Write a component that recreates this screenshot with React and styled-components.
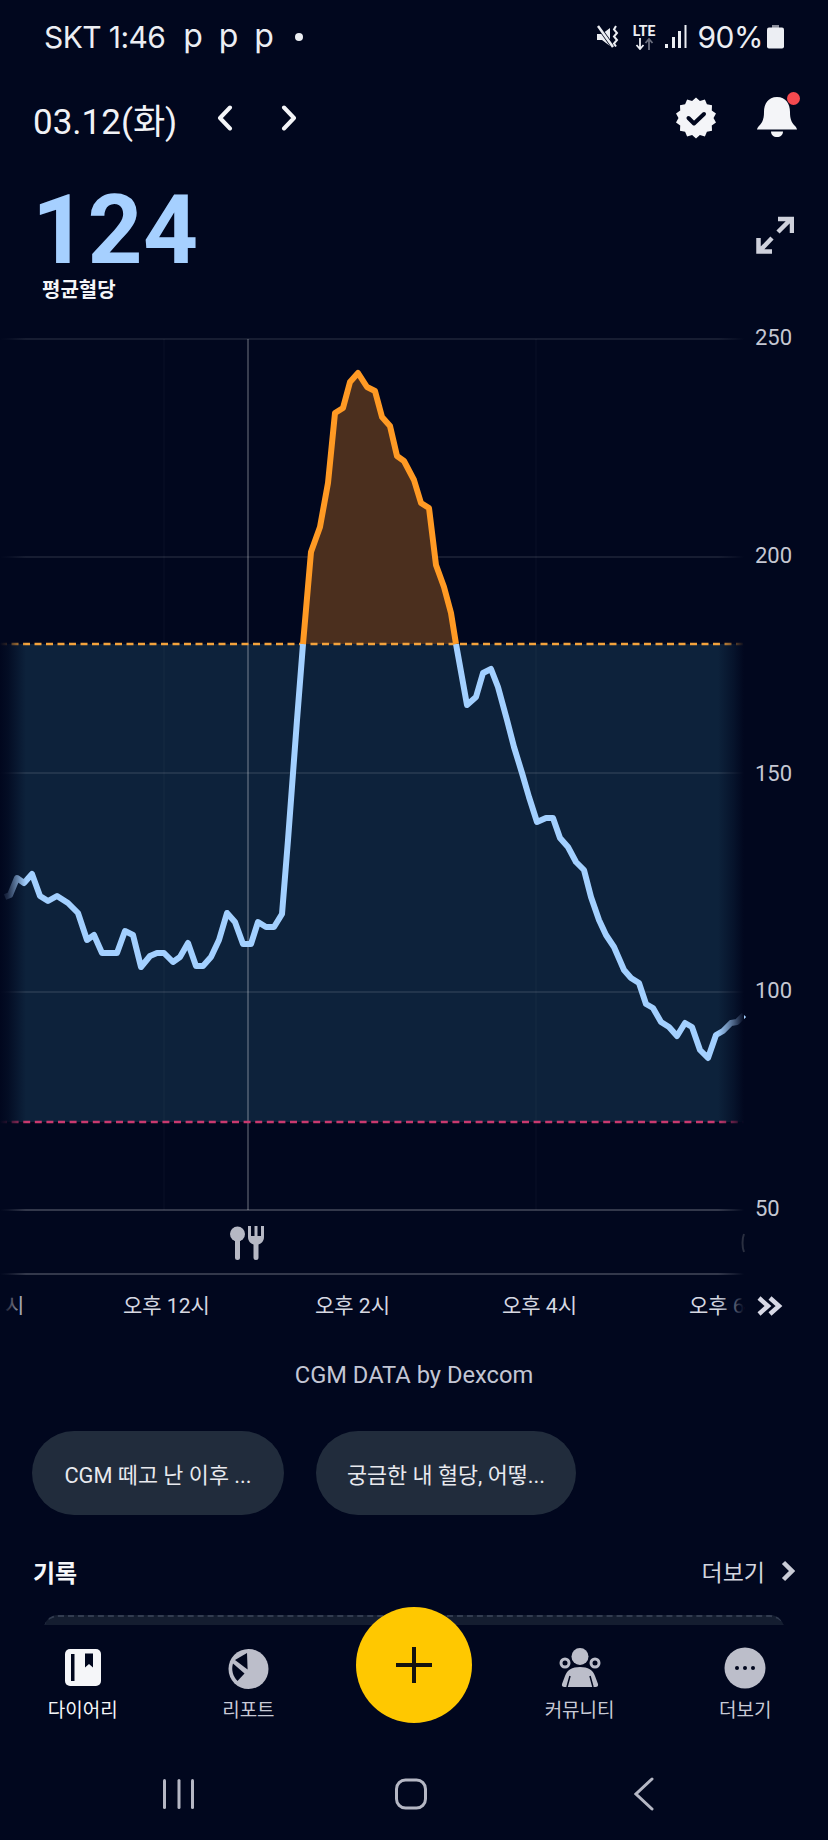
import React from "react";
import styled, { createGlobalStyle } from "styled-components";

const PAGE_BG = "#01071e";
const FONT = `Roboto, "Noto Sans CJK KR", sans-serif`;

const GlobalStyle = createGlobalStyle`
  html, body {
    margin: 0;
    padding: 0;
    background: ${PAGE_BG};
  }
`;

const Screen = styled.div`
  position: relative;
  width: 828px;
  height: 1840px;
  overflow: hidden;
  background: ${PAGE_BG};
  font-family: ${FONT};
  color: #fff;
`;

const StatusBar = styled.div`
  height: 74px;
  box-sizing: border-box;
  padding: 0 44px;
  display: flex;
  align-items: center;
  justify-content: space-between;
  color: #eceef3;
  font-size: 30px;
  font-family: Inter, Roboto, sans-serif;
  font-weight: 400;
`;

const StatusGroup = styled.div`
  display: flex;
  align-items: center;
`;

const StatusTime = styled.span`
  margin-right: 18px;
  letter-spacing: -0.6px;
`;

const NotifGlyph = styled.span`
  width: 35.5px;
  margin-top: -4px;
  font-size: 32px;
`;

const NotifDot = styled.span`
  width: 8px;
  height: 8px;
  border-radius: 50%;
  background: #eceef3;
  margin-left: 5px;
`;

const LteBox = styled.div`
  display: flex;
  flex-direction: column;
  align-items: center;
  width: 27px;
  margin: 0 7px 0 10px;
  line-height: 1;
`;

const LteText = styled.span`
  font-size: 14px;
  font-weight: 700;
  font-family: Roboto, sans-serif;
`;

const BatteryLevel = styled.span`
  letter-spacing: -0.5px;
  margin: 0 4px 0 11px;
`;

const Header = styled.header`
  height: 88px;
  box-sizing: border-box;
  padding: 0 29px 0 33px;
  display: flex;
  align-items: center;
`;

const DateLabel = styled.div`
  font-size: 35px;
  color: #f1f2f6;
  width: 184px;
  white-space: nowrap;
`;

const DateNav = styled.div`
  display: flex;
  align-items: center;
  gap: 48px;
`;

const HeaderActions = styled.div`
  margin-left: auto;
  display: flex;
  align-items: center;
  gap: 38px;
`;

const BellWrap = styled.div`
  position: relative;
  width: 44px;
  height: 44px;
`;

const RedDot = styled.span`
  position: absolute;
  right: -1px;
  top: -4px;
  width: 13px;
  height: 13px;
  border-radius: 50%;
  background: #f4494f;
`;

const Summary = styled.section`
  height: 158px;
  box-sizing: border-box;
  padding: 0 34px 0 32px;
  display: flex;
  justify-content: space-between;
`;

const AverageBlock = styled.div`
  display: flex;
  flex-direction: column;
`;

const AverageValue = styled.div`
  font-size: 96px;
  font-weight: 700;
  line-height: 76px;
  margin-top: 30px;
  color: #a6d0ff;
  letter-spacing: 0.4px;
`;

const AverageCaption = styled.div`
  font-size: 20px;
  font-weight: 700;
  line-height: 26px;
  margin: 9px 0 0 10px;
  color: #f4f5f8;
`;

const ExpandButton = styled.div`
  margin-top: 54px;
  width: 38px;
  height: 38px;
`;

const ChartSvg = styled.svg`
  display: block;
  width: 828px;
  height: 1020px;
`;

const AxisLabel = styled.text`
  font-family: ${FONT};
  font-size: ${(p) => p.$size || 22}px;
  fill: ${(p) => p.$color || "#c5c7d3"};
`;

const Credit = styled.div`
  height: 70px;
  display: flex;
  align-items: center;
  justify-content: center;
  font-size: 23.7px;
  color: #c3c6d4;
`;

const ChipRow = styled.div`
  margin-top: 21px;
  padding: 0 32px;
  display: flex;
  gap: 32px;
`;

const Chip = styled.div`
  height: 84px;
  width: ${(p) => p.$width}px;
  border-radius: 42px;
  background: #212c3c;
  display: flex;
  align-items: center;
  justify-content: center;
  font-size: 21.8px;
  color: #e8e9ee;
  white-space: nowrap;
`;

const RecordRow = styled.div`
  margin-top: 31px;
  height: 50px;
  padding: 0 33px;
  display: flex;
  align-items: center;
  justify-content: space-between;
`;

const RecordTitle = styled.div`
  font-size: 24px;
  font-weight: 700;
  color: #f6f7fa;
`;

const MoreLink = styled.div`
  display: flex;
  align-items: center;
  gap: 16px;
  font-size: 23px;
  color: #d3d5df;
`;

const CardStrip = styled.div`
  margin-top: 19px;
  height: 10px;
  overflow: hidden;
  padding: 0 44px;
`;

const CardTop = styled.div`
  height: 40px;
  box-sizing: border-box;
  border-top: 2px dashed #323c50;
  border-radius: 14px 14px 0 0;
  background: #141d30;
`;

const BottomNav = styled.nav`
  position: relative;
  height: 215px;
  background: ${PAGE_BG};
  display: flex;
  flex-direction: column;
`;

const TabRow = styled.div`
  display: grid;
  grid-template-columns: repeat(5, 1fr);
  padding-top: 21px;
`;

const Tab = styled.div`
  display: flex;
  flex-direction: column;
  align-items: center;
  gap: 7px;
  font-size: 19px;
  line-height: 28px;
  color: ${(p) => (p.$active ? "#f5f6f9" : "#c8cad6")};
`;

const TabIcon = styled.div`
  width: 44px;
  height: 44px;
`;

const AddButton = styled.div`
  position: absolute;
  left: 356px;
  top: -18px;
  width: 116px;
  height: 116px;
  border-radius: 50%;
  background: #ffc800;
  display: flex;
  align-items: center;
  justify-content: center;
`;

const SystemBar = styled.div`
  margin-top: 52px;
  height: 34px;
  display: flex;
  align-items: center;
  padding-left: 162px;
`;

const SystemSlot = styled.div`
  width: ${(p) => p.$width}px;
  height: 34px;
`;

// glucose trace, x/y in chart coordinates
const lowerLeft = [
  [5, 897], [10, 895], [17, 878], [24, 883], [32, 874], [40, 896], [48, 901], [57, 896],
  [68, 903], [78, 913], [87, 940], [94, 935], [102, 953], [117, 953], [125, 931], [133, 935],
  [141, 967], [150, 956], [157, 953], [164, 953], [173, 962], [180, 957], [188, 943], [196, 966],
  [203, 966], [211, 957], [219, 940], [227, 913], [235, 922], [243, 944], [251, 944], [258, 922],
  [266, 927], [274, 927], [282, 914], [288, 840], [297, 720], [303, 644],
];

const peak = [
  [303, 644], [311, 552], [320, 527], [328, 483], [335, 413], [343, 408], [350, 382], [358, 373],
  [367, 387], [375, 391], [382, 417], [390, 426], [397, 456], [404, 461], [414, 480], [421, 503],
  [429, 508], [436, 565], [444, 587], [451, 613], [456, 644],
];

const lowerRight = [
  [456, 644], [467, 705], [476, 697], [483, 673], [491, 669], [498, 687], [507, 720], [514, 747],
  [522, 773], [529, 797], [537, 822], [546, 818], [553, 818], [560, 838], [568, 847], [576, 862],
  [584, 870], [591, 897], [599, 920], [606, 935], [614, 947], [624, 970], [631, 978], [639, 983],
  [646, 1004], [653, 1008], [661, 1022], [669, 1027], [677, 1036], [685, 1023], [692, 1027],
  [700, 1050], [708, 1058], [716, 1035], [723, 1031], [731, 1023], [737, 1022], [744, 1015],
];

const toPoints = (pts) => pts.map((p) => p.join(",")).join(" ");

const gridLines = [339, 557, 773, 992];
const axisLines = [1210, 1274];
const yLabels = [
  ["250", 345], ["200", 563], ["150", 781], ["100", 998], ["50", 1216],
];
const xLabels = [
  ["시", 5], ["오후 12시", 123], ["오후 2시", 315], ["오후 4시", 502], ["오후 6", 689],
];

const GlucoseChart = () => (
  <ChartSvg viewBox="0 320 828 1020">
    <defs>
      <linearGradient id="fadeLeft" x1="0" x2="1" y1="0" y2="0">
        <stop offset="0" stopColor={PAGE_BG} />
        <stop offset="0.3" stopColor={PAGE_BG} stopOpacity="0.8" />
        <stop offset="1" stopColor={PAGE_BG} stopOpacity="0" />
      </linearGradient>
      <linearGradient id="fadeRight" x1="0" x2="1" y1="0" y2="0">
        <stop offset="0" stopColor={PAGE_BG} stopOpacity="0" />
        <stop offset="0.6" stopColor={PAGE_BG} stopOpacity="0.55" />
        <stop offset="1" stopColor={PAGE_BG} />
      </linearGradient>
    </defs>

    <rect x="0" y="644" width="744" height="478" fill="#0d223b" />

    {gridLines.map((y) => (
      <line key={y} x1="0" x2="744" y1={y} y2={y} stroke="#ffffff" strokeOpacity="0.09" strokeWidth="2" />
    ))}
    {axisLines.map((y) => (
      <line key={y} x1="0" x2="744" y1={y} y2={y} stroke="#ffffff" strokeOpacity="0.2" strokeWidth="2" />
    ))}
    <line x1="164" x2="164" y1="339" y2="1210" stroke="#ffffff" strokeOpacity="0.02" strokeWidth="2" />
    <line x1="536" x2="536" y1="339" y2="1210" stroke="#ffffff" strokeOpacity="0.02" strokeWidth="2" />
    <line x1="248" x2="248" y1="339" y2="1210" stroke="#ffffff" strokeOpacity="0.22" strokeWidth="2" />

    <polygon points={toPoints(peak)} fill="#4b2f1e" />
    <line x1="0" x2="744" y1="644" y2="644" stroke="#f3a23c" strokeWidth="2.5" strokeDasharray="7 4.5" />
    <line x1="0" x2="744" y1="1122" y2="1122" stroke="#c9396f" strokeWidth="2.5" strokeDasharray="7 4.6" />

    <polyline points={toPoints(lowerLeft)} fill="none" stroke="#a3d0ff" strokeWidth="6" strokeLinejoin="round" />
    <polyline points={toPoints(lowerRight)} fill="none" stroke="#a3d0ff" strokeWidth="6" strokeLinejoin="round" />
    <polyline points={toPoints(peak)} fill="none" stroke="#ff9a24" strokeWidth="6" strokeLinejoin="round" />

    {/* meal marker */}
    <g fill="#b6b8c4">
      <circle cx="237.5" cy="1234" r="7.5" />
      <rect x="235" y="1236" width="5" height="24" rx="2.5" />
      <path d="M248 1226h3v10h3.5v-10h3v10h3.5v-10h3v11c0 4-2.5 6.5-5.5 7.5v13a2.5 2.5 0 0 1-5 0v-13c-3-1-5.5-3.5-5.5-7.5z" />
    </g>

    {xLabels.map(([text, x]) => (
      <AxisLabel key={text} x={x} y="1313" $size={21} $color="#d6d8e2">{text}</AxisLabel>
    ))}

    <rect x="0" y="330" width="26" height="1000" fill="url(#fadeLeft)" />
    <rect x="718" y="330" width="26" height="1000" fill="url(#fadeRight)" />
    <path d="M744 1234c-2 5-2 13 0 18" fill="none" stroke="#2a2f40" strokeWidth="2" />

    {yLabels.map(([text, y]) => (
      <AxisLabel key={text} x="755" y={y}>{text}</AxisLabel>
    ))}

    <path d="M759 1298l9 8-9 8M770 1298l9 8-9 8" fill="none" stroke="#d8d9e6" strokeWidth="4.5" />
  </ChartSvg>
);

const MuteIcon = () => (
  <svg width="24" height="24" viewBox="0 0 24 24">
    <path d="M0 9h5l8-6v18l-8-6H0z" fill="#eceef3" />
    <path d="M1 1l15 21" stroke={PAGE_BG} strokeWidth="4" />
    <path d="M1 1l15 21" stroke="#eceef3" strokeWidth="2.5" />
    <path d="M19 1l-2 3.5 3 3.5-3 3.5 3 3.5-3 3.5 2 3" fill="none" stroke="#eceef3" strokeWidth="2" />
  </svg>
);

const SignalIcon = () => (
  <svg width="22" height="24" viewBox="0 0 22 24" fill="#eceef3">
    <rect x="0" y="19" width="3" height="4" />
    <rect x="7" y="12" width="3" height="11" />
    <rect x="13" y="6" width="3" height="17" />
    <rect x="19.5" y="0" width="2" height="23" />
  </svg>
);

const BatteryIcon = () => (
  <svg width="17" height="24" viewBox="0 0 17 24">
    <rect x="5" y="0" width="7" height="3" fill="#8b8e9b" />
    <rect x="0" y="2.5" width="17" height="21" rx="2" fill="#eceef3" />
  </svg>
);

const Chevron = ({ dir }) => (
  <svg width="16" height="26" viewBox="0 0 16 26">
    <path
      d={dir === "left" ? "M13 2.5L3 13l10 10.5" : "M3 2.5L13 13 3 23.5"}
      fill="none"
      stroke="#f4f5f8"
      strokeWidth="4"
      strokeLinecap="round"
      strokeLinejoin="round"
    />
  </svg>
);

// scalloped seal outline
const sealPoints = Array.from({ length: 28 }, (_, i) => {
  const r = i % 2 === 0 ? 20.5 : 17.5;
  const a = (i / 28) * Math.PI * 2;
  return `${21 + r * Math.sin(a)},${21 - r * Math.cos(a)}`;
}).join(" ");

const SealIcon = () => (
  <svg width="42" height="42" viewBox="0 0 42 42">
    <polygon points={sealPoints} fill="#f4f5f8" strokeLinejoin="round" />
    <path d="M13.5 21l5.5 5.5 10-9.5" fill="none" stroke={PAGE_BG} strokeWidth="4" strokeLinecap="round" strokeLinejoin="round" />
  </svg>
);

const BellIcon = () => (
  <svg width="44" height="44" viewBox="0 0 44 44">
    <path
      d="M22 1c9 0 13 7 13 15 0 6 1 10 5 14 1.5 1.5 2 3 2 3.5H2c0-.5.5-2 2-3.5 4-4 5-8 5-14C9 8 13 1 22 1z"
      fill="#f4f5f8"
    />
    <path d="M16 35.5h12c0 3.5-2.5 5.5-6 5.5s-6-2-6-5.5z" fill="#f4f5f8" />
  </svg>
);

const ExpandIcon = () => (
  <svg width="38" height="38" viewBox="0 0 38 38" fill="none" stroke="#cfd1dc" strokeWidth="4.5">
    <path d="M22 3h14v14M35 3L22 16" />
    <path d="M16 35.5H2.5V22M3 35.5L16 22" />
  </svg>
);

const SmallChevron = () => (
  <svg width="14" height="22" viewBox="0 0 14 22">
    <path d="M2.5 2.5L11 11l-8.5 8.500" fill="none" stroke="#c9cbd6" strokeWidth="4.5" />
  </svg>
);

const DiaryIcon = () => (
  <svg width="44" height="44" viewBox="0 0 44 44">
    <rect x="4" y="3" width="36" height="37" rx="5" fill="#f5f6f9" />
    <rect x="10" y="8" width="3.5" height="27" fill={PAGE_BG} />
    <path d="M24 7.5h8v14l-4-3.5-4 3.5z" fill={PAGE_BG} />
  </svg>
);

const ReportIcon = () => (
  <svg width="44" height="44" viewBox="0 0 44 44">
    <circle cx="22.5" cy="23" r="20" fill="#bcbeca" />
    <path d="M9 14L21 7l.6 16.500z" fill={PAGE_BG} />
    <path d="M7 17.500L18.500 27.500l-7 7.500C7 30.500 5 24 7 17.500z" fill={PAGE_BG} />
  </svg>
);

const CommunityIcon = () => (
  <svg width="44" height="44" viewBox="0 0 44 44">
    <g fill="#bcbeca">
      <circle cx="22" cy="10.5" r="8.5" />
      <circle cx="7" cy="17" r="5.5" />
      <circle cx="37" cy="17" r="5.5" />
      <path d="M22 21c8 0 13 3 15 9l3 8c.5 2-.5 3-2.5 3H6.500c-2 0-3-1-2.500-3l3-8c2-6 7-9 15-9z" />
    </g>
    <circle cx="7" cy="17" r="2.5" fill={PAGE_BG} />
    <circle cx="37" cy="17" r="2.5" fill={PAGE_BG} />
    <path d="M12 30l-3 11M32 30l3 11" stroke={PAGE_BG} strokeWidth="1.5" />
  </svg>
);

const MoreIcon = () => (
  <svg width="44" height="44" viewBox="0 0 44 44">
    <circle cx="22" cy="22" r="20.5" fill="#bcbeca" />
    <g fill={PAGE_BG}>
      <circle cx="14" cy="22" r="2" />
      <circle cx="22" cy="22" r="2" />
      <circle cx="30" cy="22" r="2" />
    </g>
  </svg>
);

const App = () => (
  <>
    <GlobalStyle />
    <Screen>
      <StatusBar>
        <StatusGroup>
          <StatusTime>SKT 1:46</StatusTime>
          <NotifGlyph>p</NotifGlyph>
          <NotifGlyph>p</NotifGlyph>
          <NotifGlyph>p</NotifGlyph>
          <NotifDot />
        </StatusGroup>
        <StatusGroup>
          <MuteIcon />
          <LteBox>
            <LteText>LTE</LteText>
            <svg width="20" height="12" viewBox="0 0 20 12" fill="none" strokeWidth="1.8">
              <path d="M6 0v10M2.5 7L6 11l3.5-4" stroke="#eceef3" />
              <path d="M15 12V2M11.5 5L15 1l3.5 4" stroke="#6c7080" />
            </svg>
          </LteBox>
          <SignalIcon />
          <BatteryLevel>90%</BatteryLevel>
          <BatteryIcon />
        </StatusGroup>
      </StatusBar>

      <Header>
        <DateLabel>03.12(화)</DateLabel>
        <DateNav>
          <Chevron dir="left" />
          <Chevron dir="right" />
        </DateNav>
        <HeaderActions>
          <SealIcon />
          <BellWrap>
            <BellIcon />
            <RedDot />
          </BellWrap>
        </HeaderActions>
      </Header>

      <Summary>
        <AverageBlock>
          <AverageValue>124</AverageValue>
          <AverageCaption>평균혈당</AverageCaption>
        </AverageBlock>
        <ExpandButton>
          <ExpandIcon />
        </ExpandButton>
      </Summary>

      <GlucoseChart />

      <Credit>CGM DATA by Dexcom</Credit>

      <ChipRow>
        <Chip $width={252}>CGM 떼고 난 이후 ...</Chip>
        <Chip $width={260}>궁금한 내 혈당, 어떻...</Chip>
      </ChipRow>

      <RecordRow>
        <RecordTitle>기록</RecordTitle>
        <MoreLink>
          더보기
          <SmallChevron />
        </MoreLink>
      </RecordRow>

      <CardStrip>
        <CardTop />
      </CardStrip>

      <BottomNav>
        <TabRow>
          <Tab $active>
            <TabIcon><DiaryIcon /></TabIcon>
            다이어리
          </Tab>
          <Tab>
            <TabIcon><ReportIcon /></TabIcon>
            리포트
          </Tab>
          <div />
          <Tab>
            <TabIcon><CommunityIcon /></TabIcon>
            커뮤니티
          </Tab>
          <Tab>
            <TabIcon><MoreIcon /></TabIcon>
            더보기
          </Tab>
        </TabRow>
        <AddButton>
          <svg width="38" height="38" viewBox="0 0 38 38">
            <path d="M19 1v36M1 19h36" stroke="#14130f" strokeWidth="4" />
          </svg>
        </AddButton>
        <SystemBar>
          <SystemSlot $width={233}>
            <svg width="34" height="34" viewBox="0 0 34 34" fill="#b5b7c4">
              <rect x="1" y="2" width="3" height="30" rx="1.5" />
              <rect x="15.5" y="2" width="3" height="30" rx="1.5" />
              <rect x="29" y="2" width="3" height="30" rx="1.5" />
            </svg>
          </SystemSlot>
          <SystemSlot $width={239}>
            <svg width="34" height="34" viewBox="0 0 34 34">
              <rect x="1.5" y="3" width="29" height="28" rx="9" fill="none" stroke="#b5b7c4" strokeWidth="3" />
            </svg>
          </SystemSlot>
          <SystemSlot $width={24}>
            <svg width="24" height="34" viewBox="0 0 24 34">
              <path d="M18 2L2 17l16 15" fill="none" stroke="#b5b7c4" strokeWidth="3" strokeLinecap="round" />
            </svg>
          </SystemSlot>
        </SystemBar>
      </BottomNav>
    </Screen>
  </>
);

export default App;
